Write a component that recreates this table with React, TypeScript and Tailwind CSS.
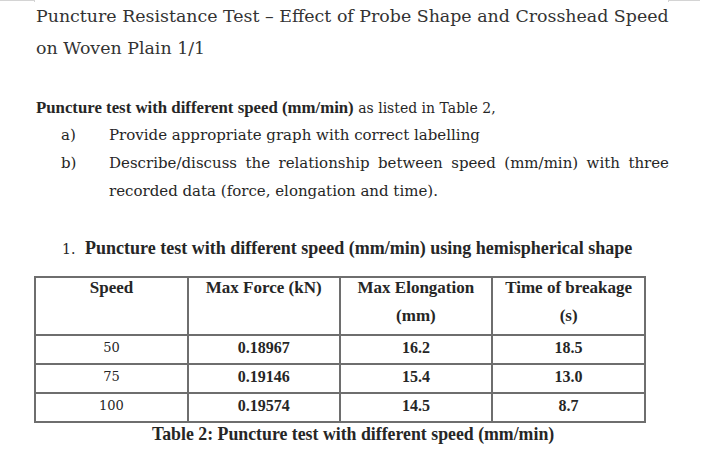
const rows = [
  { speed: "50", force: "0.18967", elong: "16.2", time: "18.5" },
  { speed: "75", force: "0.19146", elong: "15.4", time: "13.0" },
  { speed: "100", force: "0.19574", elong: "14.5", time: "8.7" },
];

const headers = [
  ["Speed", ""],
  ["Max Force (kN)", ""],
  ["Max Elongation", "(mm)"],
  ["Time of breakage", "(s)"],
];

// body text is a wide serif; bold runs are a taller, tighter serif
const bold = "font-['Liberation_Serif',serif] font-bold";

export default function App() {
  return (
    <div className="relative h-[470px] w-[720px] overflow-hidden bg-white font-['DejaVu_Serif',serif] text-[#262626]">
      {/* page corner marks */}
      <div className="absolute left-0 top-0 h-px w-[34px] bg-[#d4d4d4]" />
      <div className="absolute left-[34px] top-0 h-[2px] w-px bg-[#d4d4d4]" />
      <div className="absolute left-[668px] top-0 h-px w-[32px] bg-[#d4d4d4]" />
      <div className="absolute left-[668px] top-0 h-[2px] w-px bg-[#d4d4d4]" />

      <div className="pl-[36px]">
        <h1 className="text-[17.4px] leading-[32px] font-normal text-[#333]">
          Puncture Resistance Test – Effect of Probe Shape and Crosshead Speed
          <br />
          on Woven Plain 1/1
        </h1>

        <p className="mt-[34px] whitespace-nowrap text-[14px] leading-[20px]">
          <span className={`${bold} text-[16.8px]`}>Puncture test with different speed (mm/min)</span> as
          listed in Table 2,
        </p>

        <ol className="mt-[3px] text-[15px] leading-[28px]">
          <li className="flex">
            <span className="w-[73px] shrink-0 pl-[25px]">a)</span>
            <span className="whitespace-nowrap">Provide appropriate graph with correct labelling</span>
          </li>
          <li className="flex">
            <span className="w-[73px] shrink-0 pl-[25px]">b)</span>
            <div className="w-[560px] shrink-0">
              <div className="text-justify [text-align-last:justify]">
                Describe/discuss the relationship between speed (mm/min) with three
              </div>
              <div className="whitespace-nowrap">recorded data (force, elongation and time).</div>
            </div>
          </li>
        </ol>

        <div className="mt-[31px] flex items-baseline leading-[24px]">
          <span className="w-[49px] shrink-0 pl-[26px] text-[14px]">1.</span>
          <span className={`${bold} whitespace-nowrap text-[18px]`}>
            Puncture test with different speed (mm/min) using hemispherical shape
          </span>
        </div>
      </div>

      <div className="ml-[34px] mt-[15px] w-[612px]">
        <table className="w-full border-collapse">
          <colgroup>
            <col className="w-[154px]" />
            <col className="w-[152px]" />
            <col className="w-[153px]" />
            <col className="w-[153px]" />
          </colgroup>
          <thead>
            <tr className="h-[58px] align-top">
              {headers.map(([a, b]) => (
                <th
                  key={a}
                  className={`${bold} border-2 border-[#6e6e6e] p-0 text-center text-[17px] whitespace-nowrap`}
                >
                  <div className="leading-[20px]">{a}</div>
                  {b && <div className="leading-[36px]">{b}</div>}
                </th>
              ))}
            </tr>
          </thead>
          <tbody>
            {rows.map((r) => (
              <tr key={r.speed} className="h-[29px]">
                <td className="border-2 border-[#6e6e6e] p-0 pb-[3px] text-center text-[13px]">{r.speed}</td>
                <td className={`${bold} border-2 border-[#6e6e6e] p-0 pb-[3px] text-center text-[16px]`}>{r.force}</td>
                <td className={`${bold} border-2 border-[#6e6e6e] p-0 pb-[3px] text-center text-[16px]`}>{r.elong}</td>
                <td className={`${bold} border-2 border-[#6e6e6e] p-0 pb-[3px] text-center text-[16px]`}>{r.time}</td>
              </tr>
            ))}
          </tbody>
        </table>
        <p className={`${bold} pl-[118px] text-[17.8px] leading-[22px] whitespace-nowrap`}>
          Table 2: Puncture test with different speed (mm/min)
        </p>
      </div>
    </div>
  );
}
